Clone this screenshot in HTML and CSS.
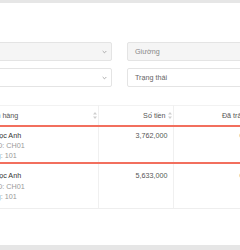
FILE: index.html
```html
<!DOCTYPE html>
<html>
	<head>
		<meta charset="utf-8" />
		<title>Hóa đơn</title>
		<link rel="stylesheet" href="styles.css">
	</head>
	<body>
		<div class="card">
			<div class="inner">
				<div class="filters">
					<div class="select disabled">
						<span>Tòa</span>
						<svg class="caret" viewBox="0 0 6 4"><path d="M0.8 0.8 L3 3 L5.2 0.8" fill="none" stroke="#9a9a9a" stroke-width="1"/></svg>
					</div>
					<div class="select disabled">
						<span>Giường</span>
						<svg class="caret" viewBox="0 0 6 4"><path d="M0.8 0.8 L3 3 L5.2 0.8" fill="none" stroke="#9a9a9a" stroke-width="1"/></svg>
					</div>
					<div class="select">
						<span>Nhà</span>
						<svg class="caret" viewBox="0 0 6 4"><path d="M0.8 0.8 L3 3 L5.2 0.8" fill="none" stroke="#9a9a9a" stroke-width="1"/></svg>
					</div>
					<div class="select">
						<span>Trạng thái</span>
						<svg class="caret" viewBox="0 0 6 4"><path d="M0.8 0.8 L3 3 L5.2 0.8" fill="none" stroke="#9a9a9a" stroke-width="1"/></svg>
					</div>
				</div>

				<table class="list">
					<colgroup>
						<col class="c-name">
						<col class="c-money">
						<col class="c-paid">
					</colgroup>
					<thead>
						<tr>
							<th><div class="th"><span>Khách hàng</span><svg class="sort" viewBox="0 0 4 7"><path d="M2 0 L4 2.6 L0 2.6 Z M0 4.4 L4 4.4 L2 7 Z" fill="#cfcfcf"/></svg></div></th>
							<th class="num"><div class="th"><span>Số tiền</span><svg class="sort" viewBox="0 0 4 7"><path d="M2 0 L4 2.6 L0 2.6 Z M0 4.4 L4 4.4 L2 7 Z" fill="#cfcfcf"/></svg></div></th>
							<th class="num"><div class="th"><span>Đã trả</span><svg class="sort" viewBox="0 0 4 7"><path d="M2 0 L4 2.6 L0 2.6 Z M0 4.4 L4 4.4 L2 7 Z" fill="#cfcfcf"/></svg></div></th>
						</tr>
					</thead>
					<tbody>
						<tr class="active">
							<td>
								<div class="name">Lê Ngọc Anh</div>
								<div class="sub">Mã HĐ: CH01</div>
								<div class="sub">Phòng: 101</div>
							</td>
							<td class="num">3,762,000</td>
							<td class="num">0</td>
						</tr>
						<tr>
							<td>
								<div class="name">Lê Ngọc Anh</div>
								<div class="sub">Mã HĐ: CH01</div>
								<div class="sub">Phòng: 101</div>
							</td>
							<td class="num">5,633,000</td>
							<td class="num">0</td>
						</tr>
					</tbody>
				</table>
			</div>
		</div>
	</body>
</html>
```

FILE: styles.css
```css
*{
	margin: 0;
	padding: 0;
	box-sizing: border-box;
}
body{
	background: #e6e6e6;
	font-family: "Liberation Sans", Arial, sans-serif;
	font-size: 7.2px;
	color: #333;
	overflow: hidden;
}
.card{
	background: #fff;
	margin-top: 3px;
	height: 242px;
	overflow: hidden;
}
.inner{
	width: 340px;
	margin-left: -26px;
	padding-top: 39px;
}

/* filters */
.filters{
	display: grid;
	grid-template-columns: 138px 138px;
	gap: 7px 15px;
}
.select{
	height: 19px;
	border: 1px solid #e4e4e4;
	border-radius: 2px;
	background: #fff;
	display: flex;
	align-items: center;
	justify-content: space-between;
	padding: 0 4px 0 7px;
	color: #666;
}
.select.disabled{
	background: #f5f5f5;
	color: #888;
}
.caret{
	width: 5px;
	height: 4px;
}

/* table */
.list{
	margin-top: 18px;
	border-collapse: collapse;
	table-layout: fixed;
	width: 275px;
}
.c-name{ width: 124px; }
.c-money{ width: 75px; }
.c-paid{ width: 76px; }

.list th{
	height: 20px;
	font-weight: normal;
	color: #555;
	text-align: left;
	padding: 0 1px 0 6px;
	border-top: 1px solid #f2f2f2;
	border-right: 1px solid #f0f0f0;
}
.th{
	display: flex;
	align-items: center;
	justify-content: space-between;
}
.list th.num .th{
	justify-content: flex-end;
}
.sort{
	width: 4px;
	height: 7px;
	margin-left: 2px;
	flex: none;
}
.list td{
	vertical-align: top;
	padding: 7.5px 6px 5.8px;
	line-height: 10.4px;
	border-right: 1px solid #f0f0f0;
	border-bottom: 1px solid #eeeeee;
}
.list td.num{
	text-align: right;
	padding-right: 5px;
	color: #555;
}
.list tr.active td{
	padding-top: 4px;
	padding-bottom: 0;
	border-top: 2px solid #f26f5e;
	border-bottom: 2px solid #f26f5e;
}
.name{
	color: #333;
}
.sub{
	color: #999;
}
```
